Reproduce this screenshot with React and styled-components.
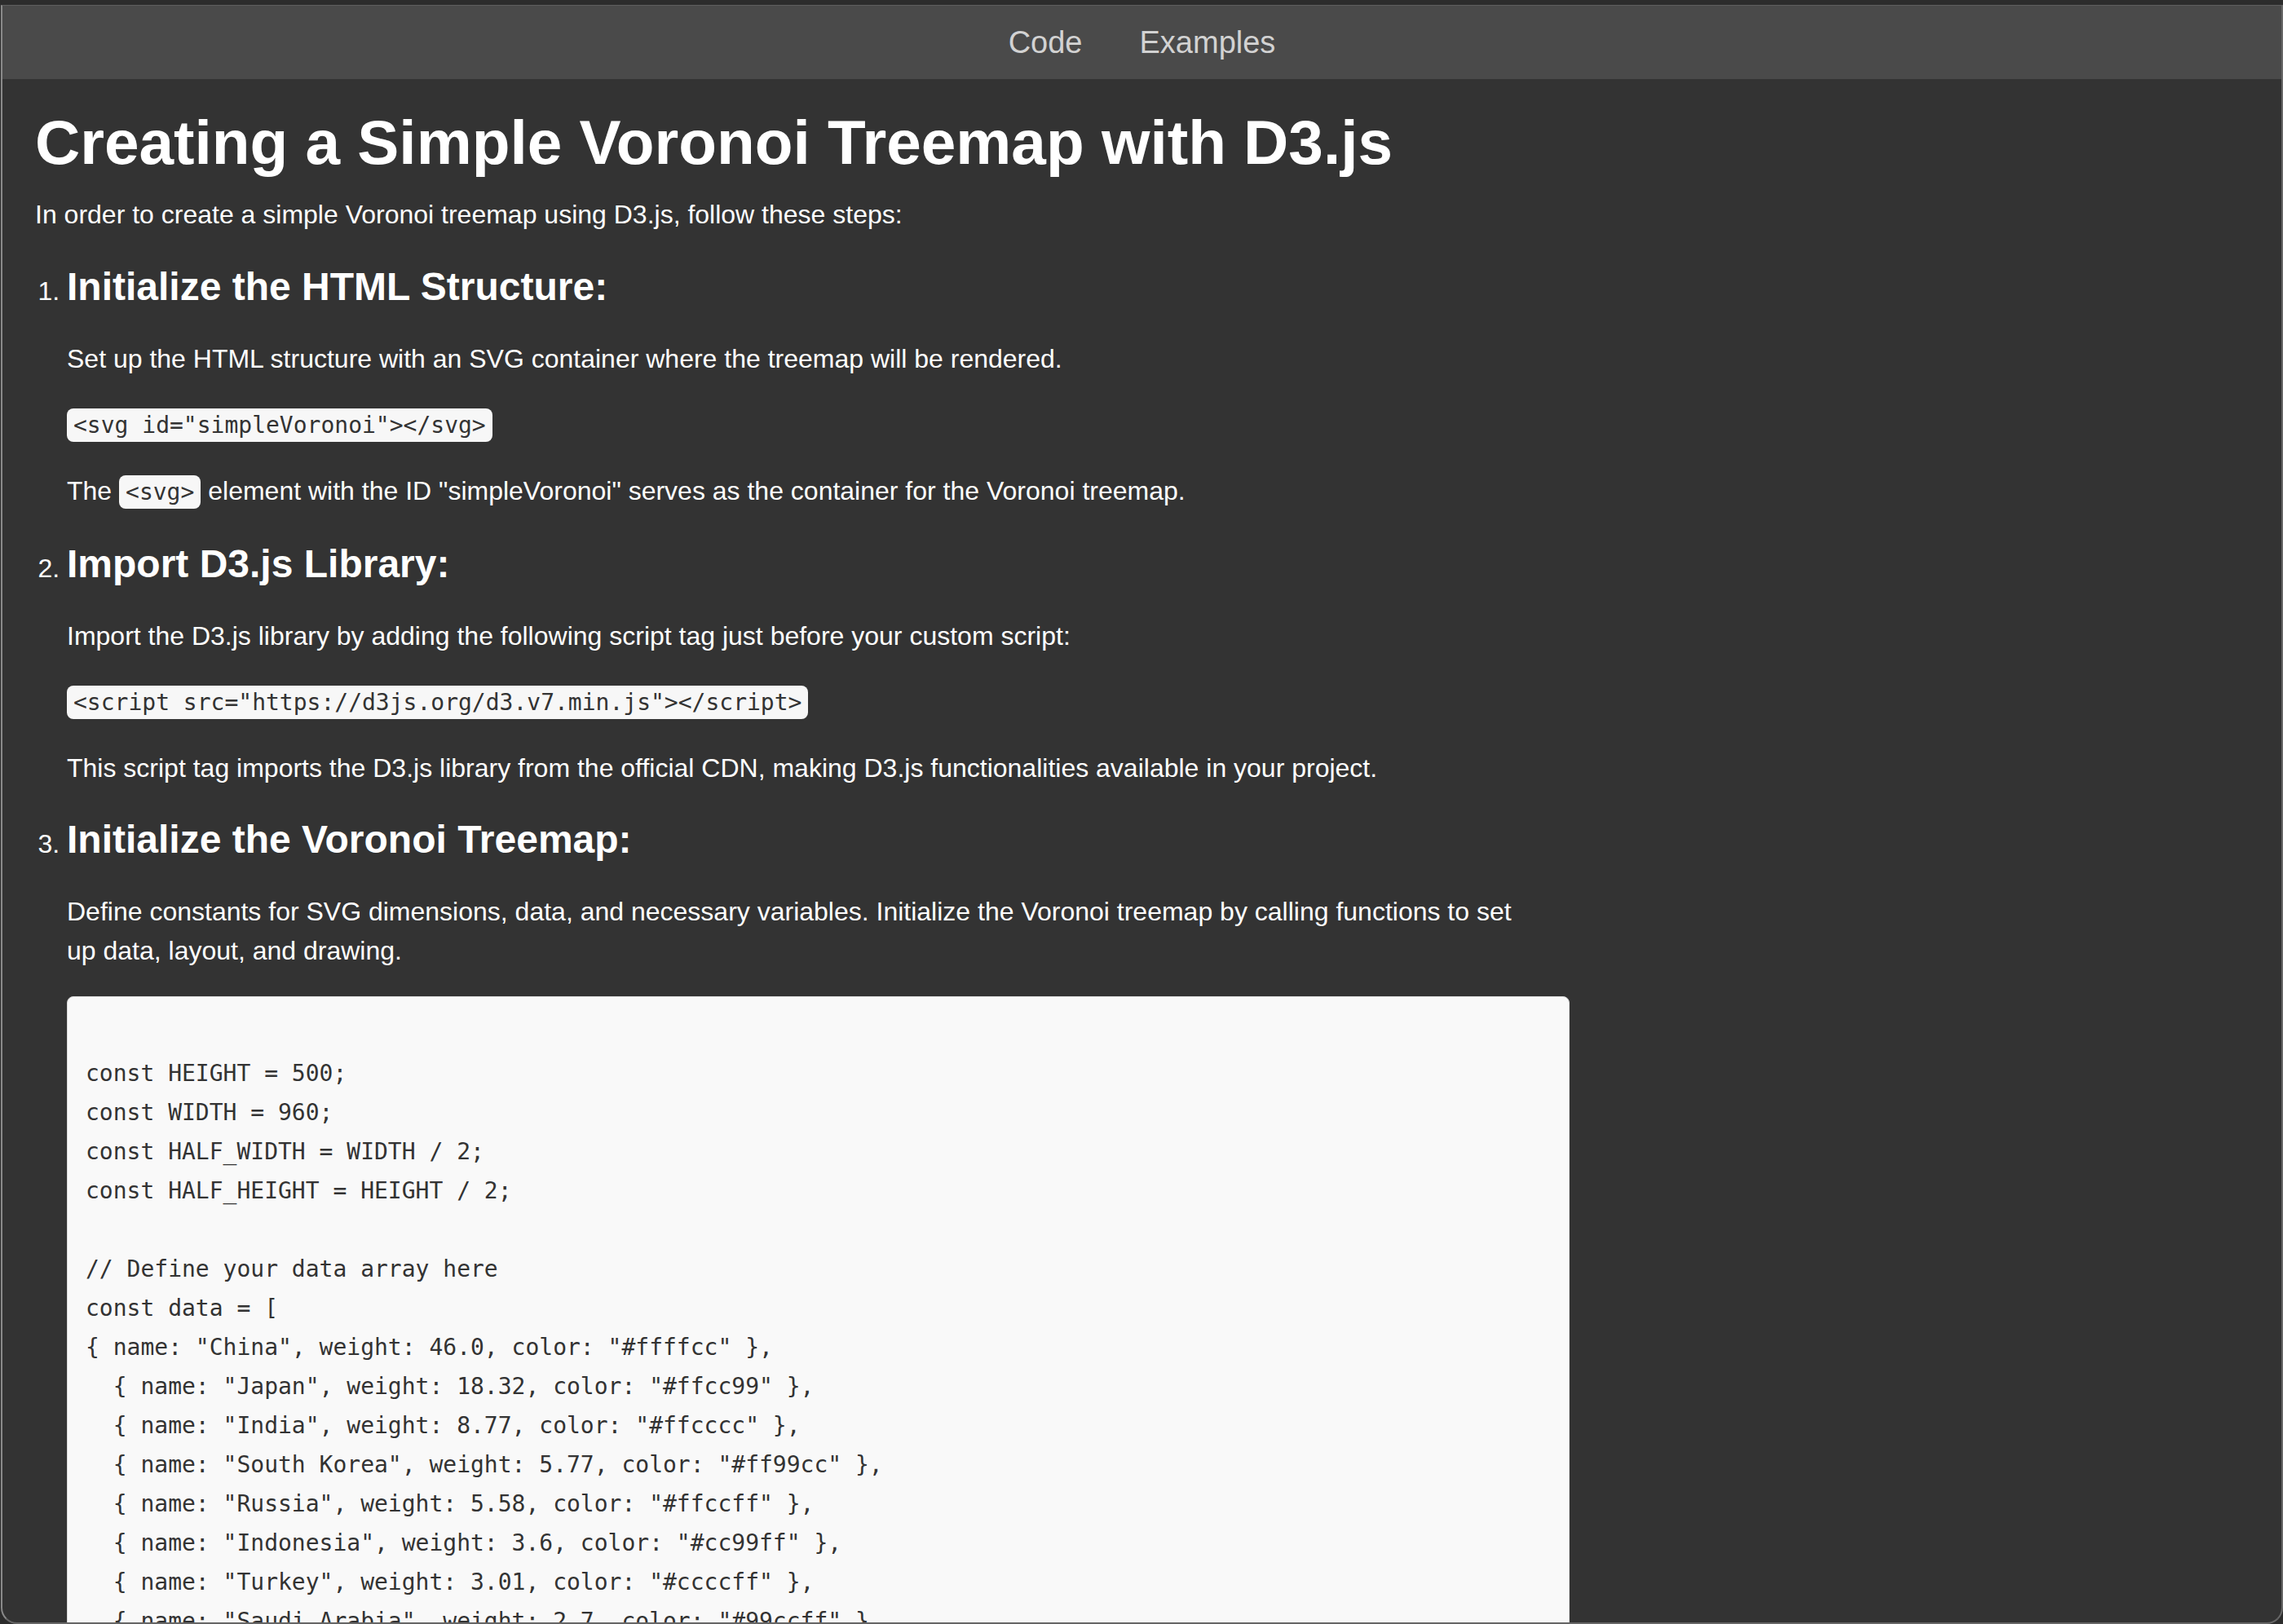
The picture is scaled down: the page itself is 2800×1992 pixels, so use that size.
import React from 'react';
import styled, { createGlobalStyle } from 'styled-components';

const GlobalStyle = createGlobalStyle`
    html, body {
        margin:0;
        padding:0;
        background-color:#2c2c2c;
        overflow:hidden;
    }
    body {
        font-family:"Liberation Sans", Arial, Helvetica, sans-serif;
    }
`;

const Window = styled.div`
    box-sizing:border-box;
    height:1986px;
    margin:6px 0 0 1px;
    background-color:#333333;
    border-top:1px solid #5e5e5e;
    border-left:2px solid #8a8a8a;
    border-right:2px solid #686868;
    border-bottom:2px solid #666;
    border-radius:0 0 20px 20px;
    overflow:hidden;
    display:flex;
    flex-direction:column;
`;

const NavBar = styled.nav`
    flex:none;
    height:90px;
    background-color:#4a4a4a;
    display:flex;
    justify-content:center;
    align-items:center;
`;

const NavLink = styled.a`
    padding:0 35px;
    font-size:38px;
    color:#d2d2d2;
    text-decoration:none;
    cursor:pointer;
`;

const Content = styled.main`
    max-width:1882px;
    padding:0 40px;
    color:#fff;
`;

const Title = styled.h1`
    margin:33px 0 19px 0;
    font-size:76.5px;
    line-height:90px;
    font-weight:bold;
`;

const Para = styled.p`
    margin:32px 0;
    font-size:32px;
    line-height:48px;
    max-width:${p => p.$narrow ? '1800px' : 'none'};
`;

const Intro = styled(Para)`
    margin:0;
`;

const Steps = styled.ol`
    margin:37px 0 0 0;
    padding-left:39px;
    font-size:32px;
    line-height:48px;
`;

const Step = styled.li`
    margin:0;
`;

const StepTitle = styled.h2`
    margin:36px 0;
    font-size:48px;
    line-height:56px;
    font-weight:bold;
`;

const Code = styled.code`
    font-family:"DejaVu Sans Mono", Menlo, monospace;
    font-size:28px;
    background-color:#f7f7f7;
    color:#333;
    padding:4px 8px;
    border-radius:8px;
`;

const CodeBlock = styled.pre`
    margin:31px 0 0 0;
    padding:22px 22px;
    background-color:#f9f9f9;
    border:1px solid #d8d8d8;
    border-radius:8px;
    font-family:"DejaVu Sans Mono", Menlo, monospace;
    font-size:28px;
    line-height:48px;
    color:#333;
    white-space:pre;
    overflow:hidden;
`;

const voronoiCode = `
const HEIGHT = 500;
const WIDTH = 960;
const HALF_WIDTH = WIDTH / 2;
const HALF_HEIGHT = HEIGHT / 2;

// Define your data array here
const data = [
{ name: "China", weight: 46.0, color: "#ffffcc" },
  { name: "Japan", weight: 18.32, color: "#ffcc99" },
  { name: "India", weight: 8.77, color: "#ffcccc" },
  { name: "South Korea", weight: 5.77, color: "#ff99cc" },
  { name: "Russia", weight: 5.58, color: "#ffccff" },
  { name: "Indonesia", weight: 3.6, color: "#cc99ff" },
  { name: "Turkey", weight: 3.01, color: "#ccccff" },
  { name: "Saudi Arabia", weight: 2.7, color: "#99ccff" },
  { name: "Iran", weight: 2.35, color: "#ccffff" },
  { name: "Thaïland", weight: 2.03, color: "#99ffcc" },
];`;

const App = () => {
    return <>
        <GlobalStyle />
        <Window>
            <NavBar>
                <NavLink>Code</NavLink>
                <NavLink>Examples</NavLink>
            </NavBar>
            <Content>
                <Title>Creating a Simple Voronoi Treemap with D3.js</Title>
                <Intro>In order to create a simple Voronoi treemap using D3.js, follow these steps:</Intro>
                <Steps>
                    <Step>
                        <StepTitle>Initialize the HTML Structure:</StepTitle>
                        <Para>Set up the HTML structure with an SVG container where the treemap will be rendered.</Para>
                        <Para><Code>{'<svg id="simpleVoronoi"></svg>'}</Code></Para>
                        <Para>The <Code>{'<svg>'}</Code> element with the ID "simpleVoronoi" serves as the container for the Voronoi treemap.</Para>
                    </Step>
                    <Step>
                        <StepTitle>Import D3.js Library:</StepTitle>
                        <Para>Import the D3.js library by adding the following script tag just before your custom script:</Para>
                        <Para><Code>{'<script src="https://d3js.org/d3.v7.min.js"></script>'}</Code></Para>
                        <Para>This script tag imports the D3.js library from the official CDN, making D3.js functionalities available in your project.</Para>
                    </Step>
                    <Step>
                        <StepTitle>Initialize the Voronoi Treemap:</StepTitle>
                        <Para $narrow>Define constants for SVG dimensions, data, and necessary variables. Initialize the Voronoi treemap by calling functions to set up data, layout, and drawing.</Para>
                        <CodeBlock>{voronoiCode}</CodeBlock>
                    </Step>
                </Steps>
            </Content>
        </Window>
    </>
}

export default App;
